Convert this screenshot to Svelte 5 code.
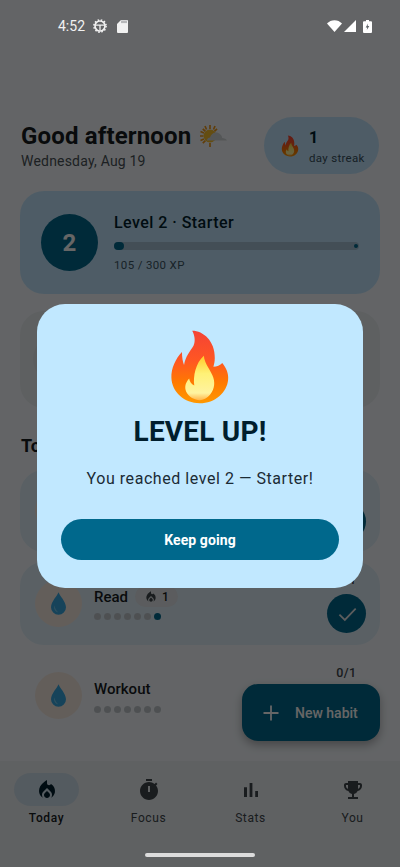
<script>
  const habits = [
    { name: 'Meditate', streak: 0, progress: '1/1', done: true, tinted: true, dots: [0, 0, 0, 0, 0, 0, 1] },
    { name: 'Read', streak: 1, progress: '1/1', done: true, tinted: true, dots: [0, 0, 0, 0, 0, 0, 1] },
    { name: 'Workout', streak: 0, progress: '0/1', done: false, tinted: false, dots: [0, 0, 0, 0, 0, 0, 0] }
  ];

  const tabs = [
    { label: 'Today', active: true, d: 'M12 12.9l-2.13 2.09C9.31 15.55 9 16.28 9 17.06 9 18.68 10.35 20 12 20s3-1.32 3-2.94c0-.78-.31-1.52-.87-2.07L12 12.9zM16 6l-.44.55C14.38 8.02 12 7.19 12 5.3V2S4 6 4 13c0 2.92 1.56 5.47 3.89 6.86-.56-.79-.89-1.76-.89-2.8 0-1.32.52-2.56 1.47-3.5L12 10.1l3.53 3.47c.95.93 1.47 2.17 1.47 3.5 0 1.02-.31 1.96-.85 2.75 1.89-1.15 3.29-3.06 3.71-5.3.66-3.55-1.07-6.9-3.86-8.52z' },
    { label: 'Focus', active: false, d: 'M15 1H9v2h6V1zm-4 13h2V8h-2v6zm8.03-6.61l1.42-1.42c-.43-.51-.9-.99-1.41-1.41l-1.42 1.42C16.07 4.74 14.12 4 12 4c-4.97 0-9 4.03-9 9s4.02 9 9 9 9-4.03 9-9c0-2.12-.74-4.07-1.97-5.61z' },
    { label: 'Stats', active: false, d: 'M5 9.2h3V19H5zM10.6 5h2.8v14h-2.8zm5.6 8H19v6h-2.8z' },
    { label: 'You', active: false, d: 'M19 5h-2V3H7v2H5c-1.1 0-2 .9-2 2v1c0 2.55 1.92 4.63 4.39 4.94.63 1.5 1.98 2.63 3.61 2.96V19H7v2h10v-2h-4v-3.1c1.63-.33 2.98-1.46 3.61-2.96C19.08 12.63 21 10.55 21 8V7c0-1.1-.9-2-2-2zM5 8V7h2v3.82C5.84 10.4 5 9.3 5 8zm14 0c0 1.3-.84 2.4-2 2.82V7h2v1z' }
  ];

  const fire = tabs[0].d;
</script>

{#snippet flame(id, cls)}
  <svg class={cls} viewBox="60 30 180 222">
    <defs>
      <linearGradient id="{id}-o" x1="0" y1="0" x2="0" y2="1">
        <stop offset="0" stop-color="#f44336" />
        <stop offset="0.42" stop-color="#ff5722" />
        <stop offset="0.72" stop-color="#ff7a00" />
        <stop offset="1" stop-color="#ff9800" />
      </linearGradient>
      <linearGradient id="{id}-i" x1="0" y1="0" x2="0" y2="1">
        <stop offset="0" stop-color="#ffca28" />
        <stop offset="0.4" stop-color="#fff176" />
        <stop offset="0.84" stop-color="#fff3a0" />
        <stop offset="1" stop-color="#ffb74d" />
      </linearGradient>
    </defs>
    <path fill="url(#{id}-o)" d="M128 35C160 35 195 65 194 115C194 125 192 133 190 140C200 140 210 135 216 129C228 145 235 160 233 178C230 215 195 247 150 247C105 247 68 215 67 172C66 145 80 115 98 97C98 112 100 125 104 135C108 110 122 95 132 78C138 65 135 48 128 35Z" />
    <path fill="url(#{id}-i)" d="M162 108C164 130 178 145 187 165C196 185 194 205 180 222C172 232 160 238 150 238C135 238 118 230 110 213C105 200 108 187 119 175C120 183 125 192 134 195C130 170 138 128 162 108Z" />
  </svg>
{/snippet}

<div class="screen">
  <div class="status">
    <span class="time">4:52</span>
    <svg class="gear" viewBox="0 0 14 14">
      <circle cx="7" cy="7" r="5" fill="none" stroke="#f1f1f1" stroke-width="1.7" />
      <circle cx="7" cy="7" r="6.1" fill="none" stroke="#f1f1f1" stroke-width="1.6" stroke-dasharray="1.5 1.7" />
      <path d="M2.5 6.2h9M7 6.2v5" stroke="#f1f1f1" stroke-width="1.3" fill="none" />
    </svg>
    <svg class="sd" viewBox="0 0 11 13">
      <path fill="#f1f1f1" d="M4 0h6a1 1 0 0 1 1 1v11a1 1 0 0 1-1 1H1a1 1 0 0 1-1-1V4z" />
      <path stroke="#5f6368" stroke-width="0.8" d="M5 .5v2.6M7 .5v2.6M9 .5v2.6" />
    </svg>
    <span class="status-gap"></span>
    <svg class="wifi" viewBox="0 0 15 12">
      <path fill="#fff" d="M0 3.6C2 1.4 4.6.2 7.5.2S13 1.4 15 3.6L7.5 12z" />
    </svg>
    <svg class="signal" viewBox="0 0 12 12">
      <path fill="#fff" d="M12 0v12H0z" />
    </svg>
    <svg class="battery" viewBox="0 0 9 13">
      <path fill="#fff" d="M3 0h3v1.2h2a1 1 0 0 1 1 1V12a1 1 0 0 1-1 1H1a1 1 0 0 1-1-1V2.200a1 1 0 0 1 1-1h2z" />
      <path fill="#5f6368" d="M5 3.500 2.700 7.500h1.500L3.800 10 6.300 6H4.700z" />
    </svg>
  </div>

  <main class="content">
    <header class="top">
      <div class="greeting">
        <h1>
          Good afternoon
          <svg class="sun" viewBox="0 0 28 24">
            <g stroke="#f29a18" stroke-width="1.7">
              <path d="M11 1v4M11 19v4M1 12h3.500M3.800 4.800l2.600 2.600M3.800 19.200l2.600-2.600M6 2l1.500 3.500M16 2l-1.500 3.500M1.500 7.500 5 9M1.500 16.500 5 15M18 4.800l-2.600 2.600" />
            </g>
            <circle cx="11" cy="12" r="6.500" fill="#fbc02d" />
            <path fill="#d3d7da" d="M8 16.500c0-2 1.500-3 3-3 .8-3 3.200-5 6-5 3.300 0 5.800 2.600 6.200 5.400 2 .1 4.300 1 4.800 2.600z" />
          </svg>
        </h1>
        <p>Wednesday, Aug 19</p>
      </div>
      <div class="streak">
        {@render flame('streak', 'streak-flame')}
        <div class="streak-text">
          <strong>1</strong>
          <span>day streak</span>
        </div>
      </div>
    </header>

    <section class="level">
      <div class="level-badge">2</div>
      <div class="level-info">
        <h2>Level 2 · Starter</h2>
        <div class="bar"><span class="bar-fill"></span><span class="bar-end"></span></div>
        <small>105 / 300 XP</small>
      </div>
    </section>

    <section class="summary">
      <div class="summary-ring"></div>
    </section>

    <h3 class="section-title">Today's habits</h3>

    <div class="habits">
      {#each habits as habit}
        <article class="habit" class:tinted={habit.tinted}>
          <div class="habit-icon">
            <svg viewBox="0 0 16 24">
              <path fill="#38a8e0" d="M8 0C9 3.500 16 10 16 16a8 8 0 0 1-16 0C0 10 7 3.500 8 0z" />
              <path fill="#7ac8ec" d="M3.500 14c-1 3.500 1 6.500 4 7.200-2-2-3.200-4.200-4-7.200z" />
            </svg>
          </div>
          <div class="habit-info">
            <div class="habit-name">
              <span>{habit.name}</span>
              {#if habit.streak}
                <span class="chip">
                  <svg viewBox="0 0 24 24"><path d={fire} /></svg>
                  {habit.streak}
                </span>
              {/if}
            </div>
            <div class="dots">
              {#each habit.dots as dot}
                <i class:on={dot}></i>
              {/each}
            </div>
          </div>
          <div class="habit-side">
            <span>{habit.progress}</span>
            <div class="check" class:done={habit.done}>
              {#if habit.done}
                <svg viewBox="0 0 24 24"><path d="M5 12.500l5 5L20 7" /></svg>
              {/if}
            </div>
          </div>
        </article>
      {/each}
    </div>
  </main>

  <button class="fab">
    <svg viewBox="0 0 24 24"><path d="M12 4.500v15M4.500 12h15" /></svg>
    New habit
  </button>

  <nav class="tabs">
    {#each tabs as tab}
      <div class="tab" class:active={tab.active}>
        <div class="tab-icon">
          <svg viewBox="0 0 24 24"><path fill-rule="evenodd" d={tab.d} /></svg>
        </div>
        <span>{tab.label}</span>
      </div>
    {/each}
  </nav>

  <div class="scrim">
    <div class="dialog">
      {@render flame('big', 'big-flame')}
      <h2>LEVEL UP!</h2>
      <p>You reached level 2 — Starter!</p>
      <button>Keep going</button>
    </div>
  </div>

  <div class="home-bar"></div>
</div>

<style>
  :global(body) {
    margin: 0;
  }

  .screen {
    position: relative;
    width: 400px;
    height: 867px;
    overflow: hidden;
    display: flex;
    flex-direction: column;
    background: #f7fbff;
    font-family: Roboto, sans-serif;
    color: #171c1f;
  }

  .status {
    position: relative;
    z-index: 3;
    flex: none;
    height: 52px;
    box-sizing: border-box;
    padding: 0 28px 0 58px;
    display: flex;
    align-items: center;
  }

  .time {
    font-size: 14px;
    color: #f1f1f1;
    margin-right: 8px;
  }

  .gear { width: 14px; height: 14px; margin-right: 10px; }
  .sd { width: 11px; height: 13px; }
  .status-gap { flex: 1; }
  .wifi { width: 15px; height: 12px; margin-right: 2px; }
  .signal { width: 12px; height: 12px; margin-right: 7px; }
  .battery { width: 9px; height: 13px; }

  .content {
    flex: 1;
    min-height: 0;
    padding: 65px 20px 0;
  }

  .top {
    display: flex;
    justify-content: space-between;
    align-items: center;
    height: 57px;
  }

  h1 {
    margin: 0;
    font-size: 24px;
    line-height: 30px;
    font-weight: 700;
    letter-spacing: 0.15px;
    display: flex;
    align-items: center;
    gap: 8px;
    margin-left: 1px;
  }

  .sun { width: 28px; height: 24px; }

  .greeting p {
    margin: 0 0 0 1px;
    font-size: 14px;
    line-height: 20px;
    letter-spacing: 0.2px;
    color: #4a5257;
  }

  .streak {
    width: 115px;
    height: 57px;
    box-sizing: border-box;
    margin-right: 1px;
    padding-left: 17px;
    border-radius: 29px;
    background: #c4e7ff;
    display: flex;
    align-items: center;
    gap: 10px;
  }

  .streak-flame { width: 18px; height: 22px; }

  .streak-text {
    padding-top: 3px;
    display: flex;
    flex-direction: column;
  }

  .streak-text strong {
    font-size: 16px;
    line-height: 22px;
    font-weight: 700;
    color: #001e2d;
  }

  .streak-text span {
    font-size: 11.5px;
    line-height: 18px;
    letter-spacing: 0.3px;
    color: #38505e;
  }

  .level {
    margin-top: 17px;
    height: 103px;
    box-sizing: border-box;
    padding: 0 21px;
    border-radius: 24px;
    background: #c4e7ff;
    display: flex;
    align-items: center;
    gap: 16px;
  }

  .level-badge {
    flex: none;
    width: 57px;
    height: 57px;
    border-radius: 50%;
    background: #006a8f;
    color: #fff;
    font-size: 24px;
    font-weight: 700;
    display: flex;
    align-items: center;
    justify-content: center;
  }

  .level-info { flex: 1; }

  .level-info h2 {
    margin: 0;
    font-size: 16px;
    line-height: 22px;
    font-weight: 500;
    letter-spacing: 0.45px;
    color: #001e2d;
  }

  .bar {
    position: relative;
    height: 8px;
    margin-top: 8px;
    border-radius: 4px;
    background: #a7c3d6;
  }

  .bar-fill {
    position: absolute;
    left: 0;
    top: 0;
    width: 10px;
    height: 8px;
    border-radius: 4px;
    background: #006a8f;
  }

  .bar-end {
    position: absolute;
    right: 1px;
    top: 2px;
    width: 4px;
    height: 4px;
    border-radius: 50%;
    background: #006a8f;
  }

  .level-info small {
    display: block;
    margin-top: 7px;
    font-size: 11.5px;
    line-height: 16px;
    letter-spacing: 0.35px;
    color: #3b5564;
  }

  .summary {
    margin-top: 17px;
    height: 97px;
    box-sizing: border-box;
    padding: 24px 13px;
    border-radius: 24px;
    background: #ecf0f3;
  }

  .summary-ring {
    width: 48px;
    height: 48px;
    border-radius: 50%;
    background: #e3e8ec;
  }

  .section-title {
    margin: 25px 0 0 1px;
    height: 25px;
    line-height: 25px;
    font-size: 18px;
    font-weight: 700;
    color: #171c1f;
  }

  .habits {
    margin-top: 11.5px;
    display: flex;
    flex-direction: column;
    gap: 10px;
  }

  .habit {
    height: 82.5px;
    box-sizing: border-box;
    padding: 0 14px 0 15px;
    border-radius: 24px;
    display: flex;
    align-items: center;
    gap: 12px;
  }

  .habit.tinted { background: #e0f0fb; }

  .habit-icon {
    flex: none;
    width: 47px;
    height: 47px;
    border-radius: 50%;
    background: #f8ebe2;
    display: flex;
    align-items: center;
    justify-content: center;
  }

  .habit-icon svg { width: 15px; height: 25px; }

  .habit-info { flex: 1; }

  .habit-name {
    min-height: 21px;
    display: flex;
    align-items: center;
    gap: 7px;
    font-size: 15px;
    font-weight: 500;
  }

  .chip {
    height: 21px;
    padding: 0 9px;
    border-radius: 11px;
    background: #e3e7ea;
    display: flex;
    align-items: center;
    gap: 4px;
    font-size: 12px;
  }

  .chip svg {
    width: 14px;
    height: 14px;
    fill: #40484c;
  }

  .dots {
    margin-top: 6px;
    display: flex;
    gap: 3px;
  }

  .dots i {
    width: 7px;
    height: 7px;
    border-radius: 50%;
    background: #c3c9ce;
  }

  .dots i.on { background: #006a8f; }

  .habit-side {
    align-self: flex-start;
    padding-top: 11px;
    width: 39px;
    display: flex;
    flex-direction: column;
    align-items: center;
    gap: 7px;
    font-size: 12.5px;
    line-height: 14px;
    font-weight: 500;
    letter-spacing: 0.4px;
    color: #40484c;
  }

  .check {
    width: 39px;
    height: 39px;
    border-radius: 50%;
    box-sizing: border-box;
  }

  .check.done {
    background: #006a8f;
    display: flex;
    align-items: center;
    justify-content: center;
  }

  .check svg {
    width: 26px;
    height: 26px;
    fill: none;
    stroke: #e8e8e8;
    stroke-width: 1.6;
  }

  .fab {
    position: absolute;
    left: 242px;
    top: 684px;
    width: 138px;
    height: 57px;
    box-sizing: border-box;
    padding: 0 0 0 17px;
    border: none;
    border-radius: 16px;
    background: #006a8f;
    color: #fff;
    font-family: inherit;
    font-size: 14px;
    font-weight: 500;
    display: flex;
    align-items: center;
    gap: 12px;
    box-shadow: 0 4px 10px rgba(0, 0, 0, 0.3);
  }

  .fab svg {
    width: 24px;
    height: 24px;
    fill: none;
    stroke: #fff;
    stroke-width: 1.8;
  }

  .tabs {
    flex: none;
    height: 106px;
    box-sizing: border-box;
    padding: 12px 15px 0 14px;
    background: #eef2f6;
    display: flex;
    justify-content: space-between;
    align-items: flex-start;
  }

  .tab {
    width: 65px;
    display: flex;
    flex-direction: column;
    align-items: center;
    gap: 4px;
    font-size: 12px;
    line-height: 16px;
    font-weight: 400;
    letter-spacing: 0.6px;
    color: #40484c;
  }

  .tab.active {
    color: #171c1f;
    font-weight: 500;
  }

  .tab-icon {
    width: 65px;
    height: 33px;
    border-radius: 17px;
    display: flex;
    align-items: center;
    justify-content: center;
  }

  .tab.active .tab-icon { background: #d3e4ef; }

  .tab-icon svg {
    width: 24px;
    height: 24px;
    fill: #40484c;
  }

  .tab.active .tab-icon svg { fill: #001e2d; }

  .scrim {
    position: absolute;
    inset: 0;
    z-index: 2;
    padding-top: 25px;
    box-sizing: border-box;
    background: rgba(0, 0, 0, 0.6);
    display: flex;
    align-items: center;
    justify-content: center;
  }

  .dialog {
    width: 326px;
    height: 284px;
    box-sizing: border-box;
    padding: 25px 24px 28px;
    border-radius: 28px;
    background: #c1e8ff;
    display: flex;
    flex-direction: column;
    align-items: center;
  }

  .big-flame {
    width: 61.5px;
    height: 76px;
    flex: none;
  }

  .dialog h2 {
    margin: 9px 0 0;
    font-size: 28px;
    line-height: 36px;
    font-weight: 700;
    letter-spacing: 0.2px;
    color: #001e2d;
  }

  .dialog p {
    margin: 17px 0 0;
    font-size: 16px;
    line-height: 24px;
    letter-spacing: 0.55px;
    color: #1b2b35;
  }

  .dialog button {
    margin-top: auto;
    width: 100%;
    height: 41px;
    flex: none;
    border: none;
    border-radius: 21px;
    background: #00688c;
    color: #fff;
    font-family: inherit;
    font-size: 14px;
    font-weight: 700;
    letter-spacing: 0.1px;
  }

  .home-bar {
    position: absolute;
    z-index: 3;
    left: 145px;
    bottom: 10px;
    width: 110px;
    height: 4px;
    border-radius: 2px;
    background: #dcdcdc;
  }
</style>
